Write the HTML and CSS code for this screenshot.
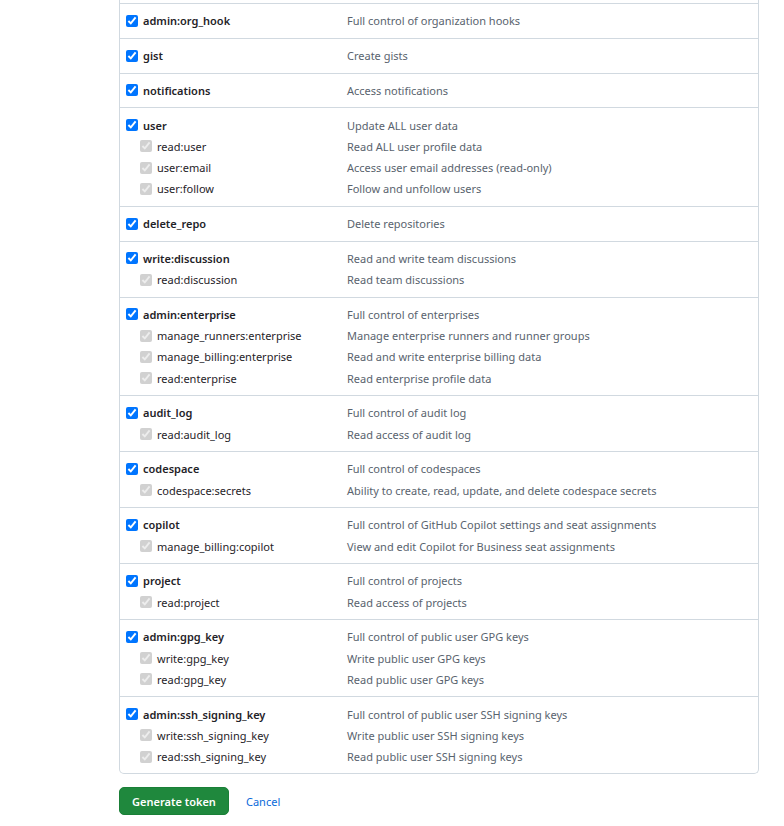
FILE: index.html
```html
<!DOCTYPE html>
<html lang="en">
<head>
    <meta charset="UTF-8">
    <meta name="viewport" content="width=device-width, initial-scale=1.0">
    <title>New personal access token</title>
    <link rel="stylesheet" href="styles.css">
</head>
<body>
    <div class="page">
        <div class="scopes">
            <div class="scope-group">
                <div class="scope"><label class="scope-name"><input type="checkbox" checked> admin:org_hook</label><span class="scope-desc">Full control of organization hooks</span></div>
            </div>
            <div class="scope-group">
                <div class="scope"><label class="scope-name"><input type="checkbox" checked> gist</label><span class="scope-desc">Create gists</span></div>
            </div>
            <div class="scope-group">
                <div class="scope"><label class="scope-name"><input type="checkbox" checked> notifications</label><span class="scope-desc">Access notifications</span></div>
            </div>
            <div class="scope-group">
                <div class="scope"><label class="scope-name"><input type="checkbox" checked> user</label><span class="scope-desc">Update ALL user data</span></div>
                <div class="scope sub"><label class="scope-name"><input type="checkbox" checked disabled> read:user</label><span class="scope-desc">Read ALL user profile data</span></div>
                <div class="scope sub"><label class="scope-name"><input type="checkbox" checked disabled> user:email</label><span class="scope-desc">Access user email addresses (read-only)</span></div>
                <div class="scope sub"><label class="scope-name"><input type="checkbox" checked disabled> user:follow</label><span class="scope-desc">Follow and unfollow users</span></div>
            </div>
            <div class="scope-group">
                <div class="scope"><label class="scope-name"><input type="checkbox" checked> delete_repo</label><span class="scope-desc">Delete repositories</span></div>
            </div>
            <div class="scope-group">
                <div class="scope"><label class="scope-name"><input type="checkbox" checked> write:discussion</label><span class="scope-desc">Read and write team discussions</span></div>
                <div class="scope sub"><label class="scope-name"><input type="checkbox" checked disabled> read:discussion</label><span class="scope-desc">Read team discussions</span></div>
            </div>
            <div class="scope-group">
                <div class="scope"><label class="scope-name"><input type="checkbox" checked> admin:enterprise</label><span class="scope-desc">Full control of enterprises</span></div>
                <div class="scope sub"><label class="scope-name"><input type="checkbox" checked disabled> manage_runners:enterprise</label><span class="scope-desc">Manage enterprise runners and runner groups</span></div>
                <div class="scope sub"><label class="scope-name"><input type="checkbox" checked disabled> manage_billing:enterprise</label><span class="scope-desc">Read and write enterprise billing data</span></div>
                <div class="scope sub"><label class="scope-name"><input type="checkbox" checked disabled> read:enterprise</label><span class="scope-desc">Read enterprise profile data</span></div>
            </div>
            <div class="scope-group">
                <div class="scope"><label class="scope-name"><input type="checkbox" checked> audit_log</label><span class="scope-desc">Full control of audit log</span></div>
                <div class="scope sub"><label class="scope-name"><input type="checkbox" checked disabled> read:audit_log</label><span class="scope-desc">Read access of audit log</span></div>
            </div>
            <div class="scope-group">
                <div class="scope"><label class="scope-name"><input type="checkbox" checked> codespace</label><span class="scope-desc">Full control of codespaces</span></div>
                <div class="scope sub"><label class="scope-name"><input type="checkbox" checked disabled> codespace:secrets</label><span class="scope-desc">Ability to create, read, update, and delete codespace secrets</span></div>
            </div>
            <div class="scope-group">
                <div class="scope"><label class="scope-name"><input type="checkbox" checked> copilot</label><span class="scope-desc">Full control of GitHub Copilot settings and seat assignments</span></div>
                <div class="scope sub"><label class="scope-name"><input type="checkbox" checked disabled> manage_billing:copilot</label><span class="scope-desc">View and edit Copilot for Business seat assignments</span></div>
            </div>
            <div class="scope-group">
                <div class="scope"><label class="scope-name"><input type="checkbox" checked> project</label><span class="scope-desc">Full control of projects</span></div>
                <div class="scope sub"><label class="scope-name"><input type="checkbox" checked disabled> read:project</label><span class="scope-desc">Read access of projects</span></div>
            </div>
            <div class="scope-group">
                <div class="scope"><label class="scope-name"><input type="checkbox" checked> admin:gpg_key</label><span class="scope-desc">Full control of public user GPG keys</span></div>
                <div class="scope sub"><label class="scope-name"><input type="checkbox" checked disabled> write:gpg_key</label><span class="scope-desc">Write public user GPG keys</span></div>
                <div class="scope sub"><label class="scope-name"><input type="checkbox" checked disabled> read:gpg_key</label><span class="scope-desc">Read public user GPG keys</span></div>
            </div>
            <div class="scope-group">
                <div class="scope"><label class="scope-name"><input type="checkbox" checked> admin:ssh_signing_key</label><span class="scope-desc">Full control of public user SSH signing keys</span></div>
                <div class="scope sub"><label class="scope-name"><input type="checkbox" checked disabled> write:ssh_signing_key</label><span class="scope-desc">Write public user SSH signing keys</span></div>
                <div class="scope sub"><label class="scope-name"><input type="checkbox" checked disabled> read:ssh_signing_key</label><span class="scope-desc">Read public user SSH signing keys</span></div>
            </div>
        </div>

        <div class="actions">
            <button class="btn-primary">Generate token</button>
            <a class="cancel" href="#">Cancel</a>
        </div>
    </div>
</body>
</html>
```

FILE: styles.css
```css
body {
    margin: 0;
    font-family: "Noto Sans", "Open Sans", sans-serif;
    font-size: 11px;
    color: #1f2328;
    background: #ffffff;
}
.page {
    margin-left: 119px;
    width: 640px;
}
.scopes {
    padding-top: 3px;
    border: 1px solid #d1d9e0;
    border-top: none;
    border-radius: 0 0 5px 5px;
}
.scope-group {
    border-top: 1px solid #d1d9e0;
    padding: 6.3px 0;
}
.scope {
    display: grid;
    grid-template-columns: 227px 1fr;
    line-height: 21.2px;
}
.scope-name {
    display: flex;
    align-items: center;
    padding-left: 6px;
    font-weight: 600;
    white-space: nowrap;
}
.scope-name input {
    width: 12px;
    height: 12px;
    margin: 0 5px 0 0;
    accent-color: #0075ff;
}
.sub .scope-name {
    padding-left: 20px;
    font-weight: 400;
}
.scope-desc {
    color: #59636e;
}
.actions {
    display: flex;
    align-items: center;
    gap: 17px;
    margin-top: 13px;
}
.btn-primary {
    width: 110px;
    height: 28px;
    padding: 0;
    font-family: inherit;
    font-size: 11px;
    font-weight: 600;
    color: #ffffff;
    background-color: #1f883d;
    border: 1px solid #1a7f37;
    border-radius: 5px;
    cursor: pointer;
}
.cancel {
    color: #0969da;
    text-decoration: none;
}
```
